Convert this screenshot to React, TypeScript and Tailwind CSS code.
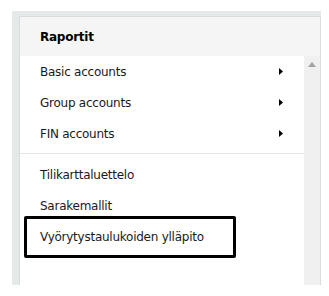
const font = { fontFamily: '"DejaVu Sans", Verdana, sans-serif' };

const Arrow = () => (
  <svg width="4" height="7" viewBox="0 0 4 7" className="block">
    <path d="M0 0 L4 3.5 L0 7 Z" fill="#000" />
  </svg>
);

const Row = ({ label, sub }: { label: string; sub?: boolean }) => (
  <div className="flex h-[31px] items-center justify-between pl-[20px] pr-[21px]">
    <span>{label}</span>
    {sub && <Arrow />}
  </div>
);

export default function App() {
  return (
    <div className="pl-[12px] pt-[11px] text-[12px] tracking-[-0.25px] text-[#1a1a1a]" style={font}>
      <div className="h-[274px] w-[309px] bg-[#e6e9ea] pl-[7px] pt-[5px]">
        <div className="flex h-full flex-col border border-b-0 border-[#d9dcdd] bg-white">
          <div className="flex h-[39px] items-center bg-[#f5f5f5] pl-[20px] font-bold text-black">
            Raportit
          </div>
          <div className="flex flex-1">
            <div className="relative flex-1">
              <Row label="Basic accounts" sub />
              <Row label="Group accounts" sub />
              <Row label="FIN accounts" sub />
              <div className="mt-[4px] mb-[5px] h-px bg-[#e5e5e5]" />
              <Row label="Tilikarttaluettelo" />
              <Row label="Sarakemallit" />
              <div className="relative">
                <Row label="Vyörytystaulukoiden ylläpito" />
                <div className="absolute left-[4px] top-[-5px] h-[42px] w-[212px] rounded-[2px] border-[3px] border-black" />
              </div>
            </div>
            <div className="flex w-[16px] justify-center bg-[#f0f0f0] pt-[6px]">
              <svg width="8" height="5" viewBox="0 0 8 5" className="block">
                <path d="M4 0 L8 5 L0 5 Z" fill="#a3a3a3" />
              </svg>
            </div>
          </div>
        </div>
      </div>
    </div>
  );
}
